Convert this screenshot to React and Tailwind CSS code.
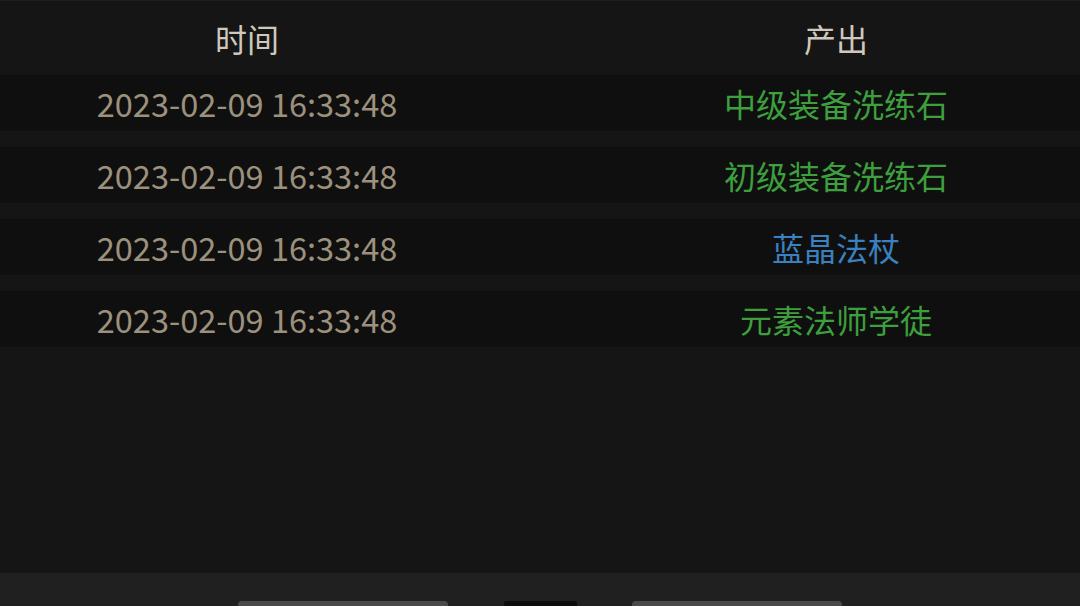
export default function App() {
  const rows = [
    { t: "2023-02-09 16:33:48", item: "中级装备洗练石", c: "text-[#3d9f3d]" },
    { t: "2023-02-09 16:33:48", item: "初级装备洗练石", c: "text-[#3d9f3d]" },
    { t: "2023-02-09 16:33:48", item: "蓝晶法杖", c: "text-[#3b80bf]" },
    { t: "2023-02-09 16:33:48", item: "元素法师学徒", c: "text-[#3d9f3d]" },
  ];
  return (
    <div
      className="w-[1080px] h-[606px] bg-[#151515] flex flex-col overflow-hidden"
      style={{ fontFamily: '"Noto Sans CJK SC", "Noto Sans", sans-serif' }}
    >
      <div className="h-[1px] bg-[#1d1d1d]" />
      <div className="grid grid-cols-[494px_488px] gap-x-[98px] h-[74px] items-center text-[32px] leading-none text-[#d0c8bc]">
        <div className="text-center">时间</div>
        <div className="text-center">产出</div>
      </div>
      <div className="flex flex-col gap-[16px]">
        {rows.map((r, i) => (
          <div
            key={i}
            className="grid grid-cols-[494px_488px] gap-x-[98px] h-[56px] items-center bg-[#0f0f0f] leading-none"
          >
            <div className="text-center text-[32.5px] text-[#9d917d]">{r.t}</div>
            <div className={"text-center text-[32px] " + r.c}>{r.item}</div>
          </div>
        ))}
      </div>
      <div className="flex-1" />
      <div className="h-[33px] bg-[#202020] flex items-end">
        <div className="ml-[238px] w-[210px] h-[5px] rounded-t-[4px] bg-[#4a4a4c]" />
        <div className="ml-[56px] w-[73px] h-[5px] rounded-t-[2px] bg-[#0c0c0c]" />
        <div className="ml-[55px] w-[210px] h-[5px] rounded-t-[4px] bg-[#4a4a4c]" />
      </div>
    </div>
  );
}
